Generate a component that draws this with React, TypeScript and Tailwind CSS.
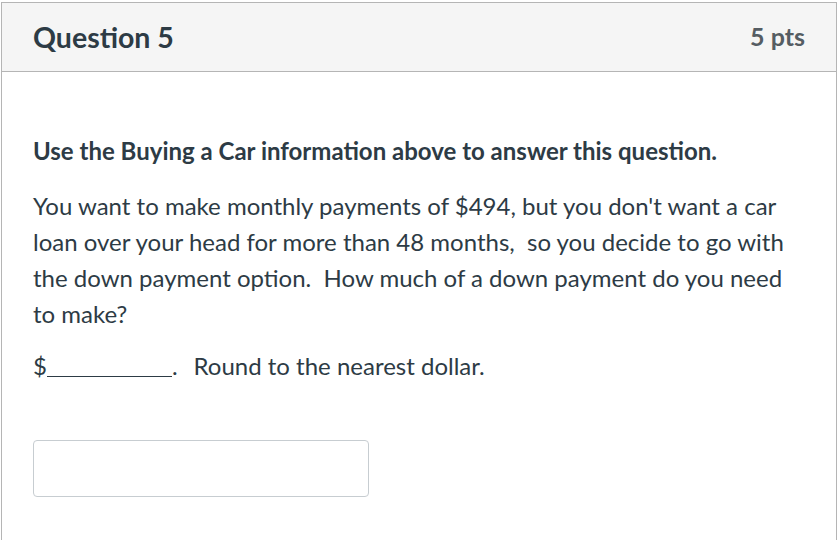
export default function App() {
  return (
    <div className="w-[838px] h-[540px] bg-white pt-[2px] pl-[1px] pr-[1px] overflow-hidden" style={{ fontFamily: "Lato, 'Open Sans', sans-serif" }}>
      <div className="h-[600px] border border-[#b5b5b5] bg-white">
        {/* Header */}
        <div className="h-[69px] bg-[#f5f5f5] border-b border-[#b5b5b5] flex items-center justify-between px-[31px]">
          <h2 className="text-[28.5px] font-bold text-[#2d3b45]">Question 5</h2>
          <span className="text-[25px] font-bold text-[#555d63]">5 pts</span>
        </div>

        {/* Body */}
        <div className="px-[31px] pt-[61px] text-[#2d3b45] text-[24px] leading-[36px]">
          <p className="font-bold">Use the Buying a Car information above to answer this question.</p>
          <p className="mt-[19px]">
            You want to make monthly payments of $494, but you don't want a car loan over your head for more than 48 months,&nbsp; so you decide to go with the down payment option.&nbsp; How much of a down payment do you need to make?
          </p>
          <p className="mt-[16px]">
            $<span className="inline-block w-[125px] border-b-[1.5px] border-[#2d3b45] mb-[-2px]" />.<span className="inline-block w-[16px]" />Round to the nearest dollar.
          </p>
          <div className="mt-[56px] w-[336px] h-[57px] border border-[#c7cdd1] rounded-[4px] bg-white" />
        </div>
      </div>
    </div>
  );
}
